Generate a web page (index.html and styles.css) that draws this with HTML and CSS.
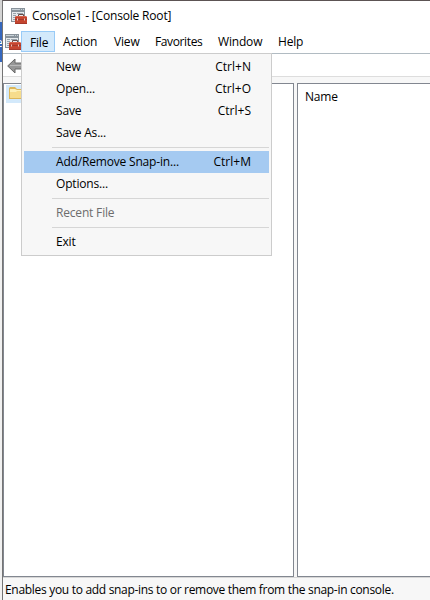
FILE: index.html
```html
<!DOCTYPE html>
<html lang="en">
<head>
<meta charset="utf-8">
<title>Console1 - [Console Root]</title>
<link rel="stylesheet" href="styles.css">
</head>
<body>
<svg width="0" height="0" class="defs">
  <symbol id="console" viewBox="0 0 16 16">
    <path fill="#89939b" d="M0 0h14v14H0z"/>
    <path fill="#c9d2d8" d="M1 1h8v1H1zM10 1h1v1h-1zM12 1h1v1h-1z"/>
    <path fill="#e6eaed" d="M1 4h12v9H1z"/>
    <path fill="#98a3ab" d="M2 5h3v1H2zM6 5h6v1H6zM2 7h3v1H2zM2 9h2v1H2zM2 11h2v1H2z"/>
    <path fill="none" stroke="#6b4a45" d="M7.500 9V6.500h5V9"/>
    <path fill="#c4452f" d="M5 8h10l1 1v6.500H4V9z"/>
    <path fill="#d9614a" d="M5 8h10v1H5z"/>
    <path fill="#a5382a" d="M4 11h12v1H4zM4 15h12v1H4z"/>
    <path fill="#e8c4ba" d="M6 10.500h1v2H6zM13 10.500h1v2h-1z"/>
  </symbol>
</svg>
<div class="desktop">
  <div class="behind"><span class="behind-letter">e</span></div>
  <div class="window">
    <header class="title"><svg class="app-icon"><use href="#console"/></svg><span>Console1 - [Console Root]</span></header>
    <nav class="menubar">
      <svg class="doc-icon"><use href="#console"/></svg>
      <span class="item open">File</span><span class="item action">Action</span><span class="item view">View</span><span class="item favorites">Favorites</span><span class="item win">Window</span><span class="item help">Help</span>
      <div class="menu">
        <div class="row"><span>New</span><span class="keys">Ctrl+N</span></div>
        <div class="row"><span>Open...</span><span class="keys">Ctrl+O</span></div>
        <div class="row"><span>Save</span><span class="keys">Ctrl+S</span></div>
        <div class="row"><span>Save As...</span></div>
        <hr>
        <div class="row selected"><span>Add/Remove Snap-in...</span><span class="keys">Ctrl+M</span></div>
        <div class="row"><span>Options...</span></div>
        <hr>
        <div class="row disabled"><span>Recent File</span></div>
        <hr>
        <div class="row"><span>Exit</span></div>
      </div>
    </nav>
    <div class="toolbar">
      <svg width="18" height="16" viewBox="0 0 18 16"><path fill="#969696" stroke="#686868" d="M.7 8 8 1v4h9v6H8v4z"/><path stroke="#b9b9b9" d="M3 7.500h13"/></svg>
    </div>
    <main class="panes">
      <section class="tree"><div class="node">
        <svg width="18" height="16" viewBox="0 0 18 16"><path fill="#dcb65a" d="M1 3l1-1h5l2 2h8v10H1z"/><path fill="#fdf0b8" d="M2 4h5l2 1h7v8H2z"/><path fill="#f6dc8c" d="M2 7h6l1-1h7v7H2z"/></svg>
      </div></section>
      <section class="list"><span>Name</span></section>
    </main>
    <footer class="status">Enables you to add snap-ins to or remove them from the snap-in console.</footer>
  </div>
</div>
</body>
</html>
```
FILE: styles.css
```css
* { box-sizing: border-box; }
body { margin: 0; overflow: hidden; font: 12px/16px "Open Sans", "Noto Sans", sans-serif; letter-spacing: -.18px; color: #000; }
.defs { display: none; }
.desktop { display: flex; width: 430px; height: 600px; }
.behind { width: 2px; flex: none; overflow: hidden; padding-top: 35px; color: #fff; background: linear-gradient(#d4d4d4 0 22px, #3567bd 22px 62px, #f1f1f1 62px); }
.behind-letter { display: block; margin-left: -4px; }
.window { flex: 1; display: flex; flex-direction: column; min-width: 0; border-left: 1px solid #747474; border-top: 1px solid #5c5354; background: #fff; }
.title { height: 30px; flex: none; display: flex; align-items: center; padding-left: 8px; gap: 5px; }
.app-icon, .doc-icon { width: 16px; height: 16px; flex: none; }
.menubar { position: relative; height: 23px; flex: none; display: flex; padding-left: 2px; border-bottom: 1px solid #b1bbc2; }
.doc-icon { margin-top: 3px; }
.item { height: 21px; line-height: 22px; white-space: nowrap; }
.open { width: 34px; padding-left: 8px; line-height: 21px; border: 1px solid #99cbf7; background: #d3e9fb; }
.action { width: 51px; margin-left: 8px; }
.view { width: 41px; }
.favorites { width: 63px; letter-spacing: -.38px; }
.win { width: 60px; }
.menu { position: absolute; z-index: 2; left: 18px; top: 22px; width: 251px; height: 203px; padding: 2px; border: 1px solid #ccc; background: #f7f7f7; }
.row { height: 22px; display: flex; justify-content: space-between; align-items: center; padding: 0 18px 0 32px; white-space: nowrap; }
.keys { letter-spacing: .02px; }
.selected { background: #a5caf1; }
.disabled { color: #6d6d6d; }
.menu hr { height: 1px; border: 0; margin: 3px 0 3px 28px; background: #d6d6d6; }
.toolbar { height: 23px; flex: none; padding: 4px 0 0 4px; border-bottom: 1px solid #ddd; }
.panes { flex: 1; min-height: 0; display: flex; gap: 3px; padding-top: 6px; background: #f7f7f7; }
.tree { width: 291px; flex: none; border: 1px solid #828790; background: #fff; }
.list { flex: 1; padding: 5px 0 0 7px; border: 1px solid #828790; border-right: 0; background: #fff; }
.node { width: 20px; height: 18px; margin: 1px 0 0 2px; background: #d3e9fb; }
.node svg { margin-left: 2px; }
.status { height: 23px; flex: none; padding: 4px 0 0 2px; border-top: 1px solid #d7d7d7; background: #f7f7f7; white-space: nowrap; letter-spacing: -.305px; }
```
